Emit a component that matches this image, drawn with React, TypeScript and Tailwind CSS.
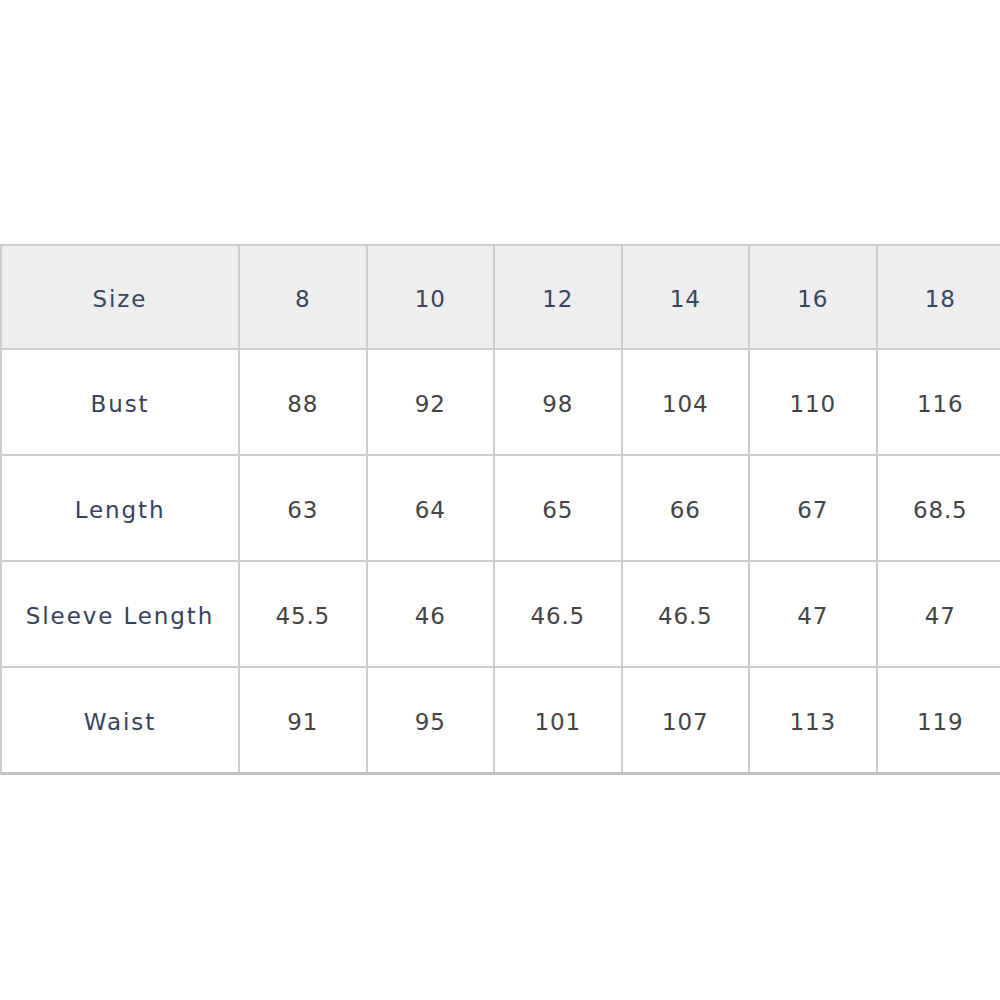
const sizes = ["8", "10", "12", "14", "16", "18"];

const rows = [
  { label: "Bust", values: ["88", "92", "98", "104", "110", "116"] },
  { label: "Length", values: ["63", "64", "65", "66", "67", "68.5"] },
  { label: "Sleeve Length", values: ["45.5", "46", "46.5", "46.5", "47", "47"] },
  { label: "Waist", values: ["91", "95", "101", "107", "113", "119"] },
];

export default function App() {
  return (
    <main className="w-[1000px] h-[1000px] bg-white overflow-hidden pt-[244px] font-['DejaVu_Sans',sans-serif] text-[23px]">
      <div className="w-[1004px] grid grid-cols-[236px_repeat(6,125.5px)] gap-[2px] bg-[#cdcdcd] border-2 border-[#cdcdcd] border-r-0 border-b-[3px] border-b-[#c2c2c2]">
        {/* header row */}
        <div className="h-[102px] pt-1 bg-[#eeeeee] flex items-center justify-center text-[#3a4660] tracking-[1.9px]">Size</div>
        {sizes.map((s) => (
          <div key={s} className="h-[102px] pt-1 bg-[#eeeeee] flex items-center justify-center text-[#3a4660] tracking-[0.8px]">
            {s}
          </div>
        ))}

        {/* body rows */}
        {rows.map((row) => (
          <>
            <div key={row.label} className="h-[104px] pt-1 bg-white flex items-center justify-center text-[#36425c] tracking-[1.9px]">
              {row.label}
            </div>
            {row.values.map((v, i) => (
              <div key={row.label + i} className="h-[104px] pt-1 bg-white flex items-center justify-center text-[#444444] tracking-[0.8px]">
                {v}
              </div>
            ))}
          </>
        ))}
      </div>
    </main>
  );
}
